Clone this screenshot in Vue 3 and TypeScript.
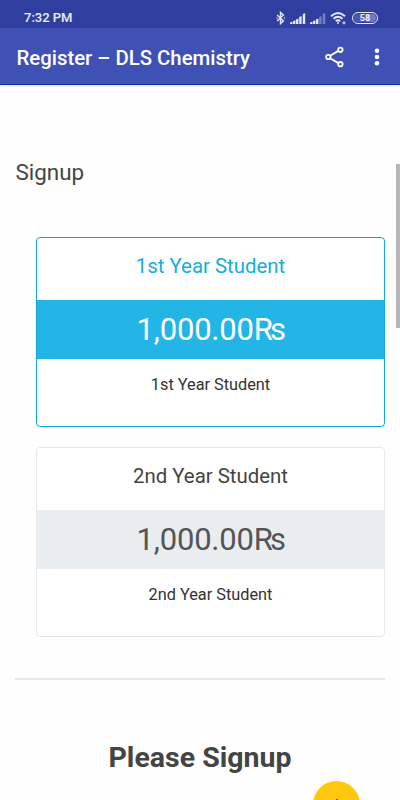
<script setup lang="ts">
interface Plan {
  id: number
  name: string
  amount: string
  currency: string
  description: string
  selected: boolean
}

const plans: Plan[] = [
  { id: 1, name: '1st Year Student', amount: '1,000.00', currency: 'Rs', description: '1st Year Student', selected: true },
  { id: 2, name: '2nd Year Student', amount: '1,000.00', currency: 'Rs', description: '2nd Year Student', selected: false },
]
</script>

<template>
  <div class="screen">
    <header class="top">
      <div class="status">
        <span class="time">7:32 PM</span>
        <svg class="bluetooth" viewBox="0 0 10 14" width="10" height="14">
          <path d="M1.2 4 L7.4 9.9 L4.5 12.6 V1.4 L7.4 4.1 L1.2 10" />
          <circle cx="1" cy="7" r=".7" /><circle cx="8.6" cy="7" r=".7" />
        </svg>
        <svg class="signal" viewBox="0 0 16 11" width="16" height="11">
          <path d="M0 9.6 2.4 8.8V11H0zM3 8.2l2.4-1V11H3zM6 6.4l2.4-1V11H6zM9.2 4l2.4-1V11H9.2zM12.8 1l2.4-1v11h-2.4z" />
        </svg>
        <svg class="signal" viewBox="0 0 16 11" width="16" height="11">
          <path d="M0 9.6 2.4 8.8V11H0zM3 8.2l2.4-1V11H3zM6 6.4l2.4-1V11H6z" />
          <path class="dim" d="M9.2 4l2.4-1V11H9.2zM12.8 1l2.4-1v11h-2.4z" />
        </svg>
        <svg class="wifi" viewBox="0 0 17 14" width="17" height="14">
          <path d="M1 5.2 Q8 -1.4 15 5.2M3.5 7.8 Q8 3.7 12.5 7.8M5.8 10.2 Q8 8.3 10.2 10.2" />
          <circle cx="8" cy="12" r="1" /><circle class="dot" cx="14" cy="11.8" r="1.6" />
        </svg>
        <span class="battery"><span class="level">58</span></span>
      </div>
      <div class="appbar">
        <h1>Register – DLS Chemistry</h1>
        <svg class="share" viewBox="0 0 20 22" width="20" height="22">
          <path d="M5.1 9.8 13.4 4.9M5.1 12.2l8.3 4.9" />
          <circle cx="3.3" cy="11" r="2.2" /><circle cx="15.4" cy="3.8" r="2.2" /><circle cx="15.4" cy="18.2" r="2.2" />
        </svg>
        <svg class="more" viewBox="0 0 6 18" width="6" height="18">
          <circle cx="3" cy="2.8" r="2.3" /><circle cx="3" cy="9" r="2.3" /><circle cx="3" cy="15.2" r="2.3" />
        </svg>
      </div>
    </header>

    <main class="content">
      <h2 class="heading">Signup</h2>
      <section class="plans">
        <article v-for="plan in plans" :key="plan.id" class="plan" :class="{ selected: plan.selected }">
          <h3 class="name">{{ plan.name }}</h3>
          <div class="price">{{ plan.amount }}<span class="currency">{{ plan.currency }}</span></div>
          <p class="description">{{ plan.description }}</p>
        </article>
      </section>
      <hr class="rule">
      <h2 class="prompt">Please Signup</h2>
    </main>

    <div class="scrollbar"></div>
    <button class="fab" aria-label="Scroll up">
      <svg viewBox="0 0 16 16" width="16" height="16"><path d="M8 15V2M3 7l5-5 5 5" /></svg>
    </button>
  </div>
</template>

<style>
body {
  margin: 0;
}
</style>

<style scoped>
.screen {
  position: relative;
  width: 400px;
  height: 800px;
  overflow: hidden;
  background: #fefefe;
  color: #444;
  font-family: Roboto, "Liberation Sans", sans-serif;
}
h1, h2, h3, p {
  margin: 0;
  font-weight: 400;
}
.top {
  height: 85px;
  box-sizing: border-box;
  background: #3f51b5;
  border-bottom: 1px solid #1233a8;
  box-shadow: 0 1px 2px #0002;
}
.status {
  display: flex;
  align-items: center;
  height: 28px;
  padding: 8px 0 0 24px;
  box-sizing: border-box;
  background: #303f9f;
  color: #eef0ff;
}
.time {
  width: 252px;
  font-size: 13px;
  font-weight: 500;
  line-height: 20px;
}
.status svg {
  flex: none;
  fill: #e6e8fb;
}
.bluetooth path {
  fill: none;
  stroke: #e6e8fb;
  stroke-width: 1.4;
}
.status .signal {
  margin-left: 4px;
}
.dim {
  opacity: .4;
}
.wifi {
  margin-left: 4px;
}
.wifi path {
  fill: none;
  stroke: #e6e8fb;
  stroke-width: 1.9;
}
.wifi .dot {
  opacity: .75;
}
.battery {
  display: flex;
  width: 26px;
  height: 12px;
  margin-left: 5px;
  padding: 1px;
  box-sizing: border-box;
  border: 1px solid #e6e8fb;
  border-radius: 6px;
}
.level {
  flex: 1;
  border-radius: 4px;
  background: linear-gradient(90deg, #4c59ae 60%, #6f7ac2 60%);
  font-size: 9px;
  font-weight: 700;
  line-height: 8px;
  text-align: center;
}
.appbar {
  display: flex;
  align-items: center;
  height: 56px;
  padding: 2px 0 0 16.5px;
  box-sizing: border-box;
  color: #fff;
}
h1 {
  width: 308.5px;
  padding-top: 2px;
  font-size: 20.35px;
  font-weight: 500;
  line-height: 54px;
  white-space: nowrap;
}
.share {
  fill: none;
  stroke: #fff;
  stroke-width: 1.8;
}
.more {
  margin-left: 29px;
  fill: #fff;
}
.content {
  padding: 71px 15px 0;
}
.heading {
  padding-left: .5px;
  font-size: 22.4px;
  line-height: 32px;
}
.plans {
  display: grid;
  gap: 20px;
  margin: 49px 0 0 21px;
}
.plan {
  height: 190px;
  box-sizing: border-box;
  border: 1px solid #e8e8e8;
  border-radius: 4px;
  text-align: center;
  background: #fff;
}
.name {
  height: 62px;
  font-size: 20.4px;
  line-height: 57px;
}
.price {
  height: 59px;
  background: #e9edf0;
  color: #555;
  font-size: 31px;
  line-height: 59px;
  letter-spacing: -.2px;
}
.currency {
  margin-right: 1.5px;
  letter-spacing: -3px;
}
.description {
  color: #333;
  font-size: 16.3px;
  line-height: 51px;
}
.selected {
  border-color: #12a9dc;
}
.selected .name {
  color: #12aee0;
}
.selected .price {
  background: #23b5e6;
  color: #fff;
}
.rule {
  height: 2px;
  margin: 41px 0 0;
  border: 0;
  background: #e8e8e8;
}
.prompt {
  margin-top: 60px;
  font-size: 28.5px;
  font-weight: 700;
  line-height: 36px;
  text-align: center;
}
.scrollbar {
  position: absolute;
  top: 164px;
  right: 0;
  width: 4px;
  height: 164px;
  background: #b7b7b7;
}
.fab {
  position: absolute;
  top: 781px;
  left: 313px;
  width: 47px;
  height: 47px;
  padding: 17px 16px;
  border: 0;
  border-radius: 50%;
  background: #ffc80f;
}
.fab svg {
  display: block;
  fill: none;
  stroke: #333;
  stroke-width: 1.6;
}
</style>
